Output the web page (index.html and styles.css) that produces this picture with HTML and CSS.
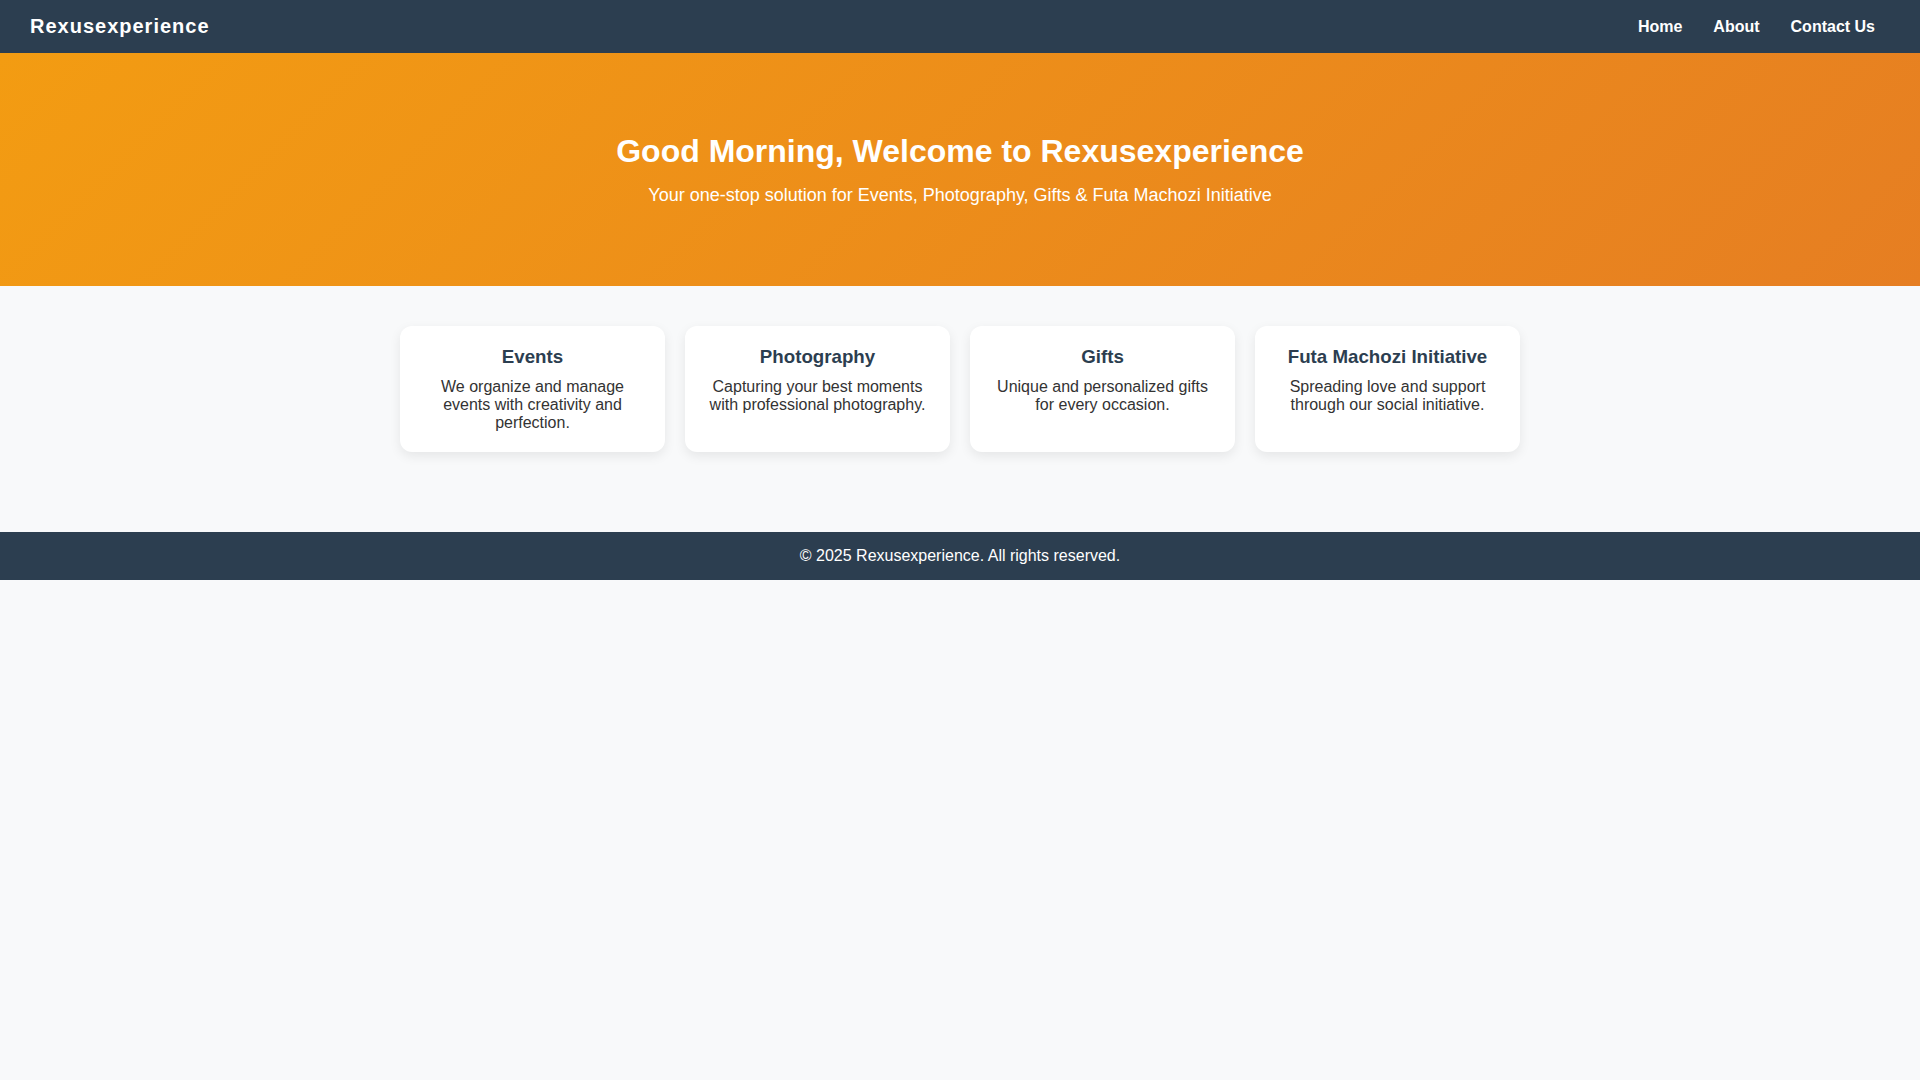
FILE: index.html
```html
<!DOCTYPE html>
<html lang="en">
<head>
<meta charset="utf-8">
<title>Rexusexperience</title>
<link rel="stylesheet" href="styles.css">
</head>
<body>
<header class="navbar">
  <div class="logo">Rexusexperience</div>
  <nav class="nav-links">
    <a href="#">Home</a>
    <a href="#">About</a>
    <a href="#">Contact Us</a>
  </nav>
</header>
<section class="hero">
  <h1>Good Morning, Welcome to Rexusexperience</h1>
  <p>Your one-stop solution for Events, Photography, Gifts &amp; Futa Machozi Initiative</p>
</section>
<main class="services">
  <div class="card">
    <h3>Events</h3>
    <p>We organize and manage events with creativity and perfection.</p>
  </div>
  <div class="card">
    <h3>Photography</h3>
    <p>Capturing your best moments with professional photography.</p>
  </div>
  <div class="card">
    <h3>Gifts</h3>
    <p>Unique and personalized gifts for every occasion.</p>
  </div>
  <div class="card">
    <h3>Futa Machozi Initiative</h3>
    <p>Spreading love and support through our social initiative.</p>
  </div>
</main>
<footer class="footer">© 2025 Rexusexperience. All rights reserved.</footer>
</body>
</html>
```
FILE: styles.css
```css
* { box-sizing: border-box; }
body {
  margin: 0;
  font-family: "Liberation Sans", Arial, sans-serif;
  background: #f8f9fa;
  color: #333;
}
.navbar {
  background: #2c3e50;
  display: flex;
  justify-content: space-between;
  align-items: center;
  padding: 15px 30px;
}
.logo {
  color: #fff;
  font-size: 20px;
  font-weight: bold;
  letter-spacing: 1px;
  line-height: 23px;
}
.nav-links {
  display: flex;
  gap: 31px;
  padding-right: 15px;
}
.nav-links a {
  color: #fff;
  text-decoration: none;
  font-weight: bold;
  font-size: 16px;
}
.hero {
  background: linear-gradient(135deg, #f39c12, #e67e22);
  color: #fff;
  text-align: center;
  padding: 80px 20px;
  font-family: "Liberation Sans Narrow", "Arial Narrow", "Liberation Sans", sans-serif;
}
.hero h1 {
  margin: 0 0 15px;
  font-size: 32px;
  font-weight: bold;
}
.hero p {
  margin: 0;
  font-size: 18px;
}
.services {
  display: grid;
  grid-template-columns: repeat(4, 265px);
  gap: 20px;
  justify-content: center;
  padding: 40px 20px 80px;
}
.card {
  background: #fff;
  border-radius: 12px;
  box-shadow: 0 4px 12px rgba(0, 0, 0, 0.08);
  padding: 20px;
  text-align: center;
}
.card h3 {
  margin: 0 0 10px;
  font-size: 18.72px;
  color: #2c3e50;
}
.card p {
  margin: 0;
  font-size: 16px;
  color: #333;
}
.footer {
  background: #2c3e50;
  color: #fff;
  text-align: center;
  padding: 15px;
  font-size: 16px;
}
```
